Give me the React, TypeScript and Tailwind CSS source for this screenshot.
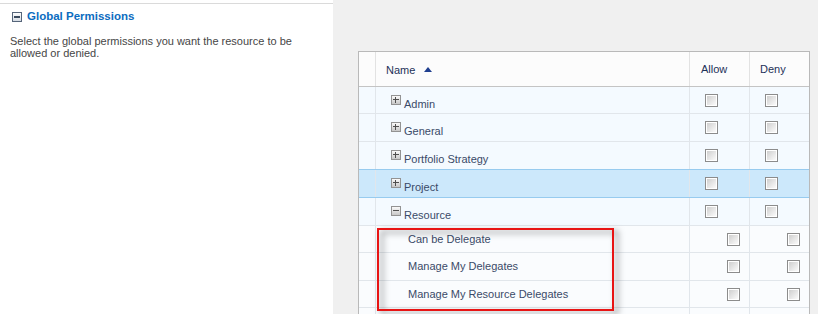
import React from "react";

function Checkbox() {
  return (
    <svg width="13" height="13" viewBox="0 0 13 13" className="block shrink-0">
      <defs>
        <linearGradient id="cbg" x1="0" y1="0" x2="1" y2="1">
          <stop offset="0" stopColor="#cfcfcf" />
          <stop offset="1" stopColor="#fbfbfb" />
        </linearGradient>
      </defs>
      <rect x="0.5" y="0.5" width="12" height="12" fill="#ffffff" stroke="#8c8c8c" />
      <rect x="2" y="2" width="9" height="9" fill="url(#cbg)" />
    </svg>
  );
}

function ExpandIcon({ open }: { open?: boolean }) {
  return (
    <svg width="10" height="10" viewBox="0 0 10 10" className="block shrink-0">
      <defs>
        <linearGradient id="exg" x1="0" y1="0" x2="0" y2="1">
          <stop offset="0" stopColor="#fdfdfd" />
          <stop offset="1" stopColor="#c4c4c4" />
        </linearGradient>
      </defs>
      <rect x="0.5" y="0.5" width="9" height="9" fill="url(#exg)" stroke="#939393" />
      <rect x="2" y="4" width="6" height="1" fill="#4f4f4f" />
      {!open && <rect x="4" y="2" width="1" height="6" fill="#4f4f4f" />}
    </svg>
  );
}

function SectionIcon() {
  return (
    <svg width="10" height="10" viewBox="0 0 10 10" className="block shrink-0">
      <defs>
        <linearGradient id="scg" x1="0" y1="0" x2="0" y2="1">
          <stop offset="0" stopColor="#ffffff" />
          <stop offset="1" stopColor="#d3d9e1" />
        </linearGradient>
      </defs>
      <rect x="0.5" y="0.5" width="9" height="9" fill="url(#scg)" stroke="#56657a" />
      <rect x="2" y="4" width="6" height="2" fill="#3b4a5e" />
    </svg>
  );
}

type Row = {
  name: string;
  kind: "parent" | "child";
  open?: boolean;
  h: string;
  rowClass: string;
};

const rows: Row[] = [
  { name: "Admin", kind: "parent", h: "h-[27px]", rowClass: "bg-[#f4faff] border-[#e1e6eb]" },
  { name: "General", kind: "parent", h: "h-[28px]", rowClass: "bg-[#f4faff] border-[#e1e6eb]" },
  { name: "Portfolio Strategy", kind: "parent", h: "h-[28px]", rowClass: "bg-[#f4faff] border-[#97cbef]" },
  { name: "Project", kind: "parent", h: "h-[28px]", rowClass: "bg-[#cce8fb] border-[#97cbef]" },
  { name: "Resource", kind: "parent", open: true, h: "h-[28px]", rowClass: "bg-[#f4faff] border-[#e1e6eb]" },
  { name: "Can be Delegate", kind: "child", h: "h-[27px]", rowClass: "bg-[#fafcfe] border-[#e1e6eb]" },
  { name: "Manage My Delegates", kind: "child", h: "h-[28px]", rowClass: "bg-[#fafcfe] border-[#e1e6eb]" },
  { name: "Manage My Resource Delegates", kind: "child", h: "h-[27px]", rowClass: "bg-[#fafcfe] border-[#e1e6eb]" },
];

function TableRow({ row }: { row: Row }) {
  const child = row.kind === "child";
  return (
    <div className={`flex border-b ${row.h} ${row.rowClass}`}>
      <div className="w-[17px] border-r border-[#e1e6eb]" />
      {child ? (
        <div className="w-[314px] border-r border-[#e1e6eb] pl-[32px] pt-[7px] leading-[13px] text-[#3a4a68]">
          {row.name}
        </div>
      ) : (
        <div className="w-[314px] border-r border-[#e1e6eb] flex items-start pl-[15px] pt-[8px] text-[#3a4a68]">
          <ExpandIcon open={row.open} />
          <span className="ml-[3px] mt-[3px] leading-[13px]">{row.name}</span>
        </div>
      )}
      <div className={`w-[60px] border-r border-[#e1e6eb] flex items-center ${child ? "pl-[37px]" : "pl-[15px]"}`}>
        <Checkbox />
      </div>
      <div className={`w-[59px] flex items-center ${child ? "pl-[37px]" : "pl-[15px]"}`}>
        <Checkbox />
      </div>
    </div>
  );
}

export default function App() {
  return (
    <div className="flex w-[818px] h-[314px] overflow-hidden font-['Liberation_Sans',Arial,sans-serif] text-[11px]">
      <div className="w-[333px] shrink-0 bg-white pt-[3px]">
        <div className="border-t border-[#dadada] pl-[12px] pt-[6px]">
          <div className="flex items-center">
            <SectionIcon />
            <span className="ml-[5px] font-bold text-[11.5px] leading-[13px] text-[#0b6cbf]">Global Permissions</span>
          </div>
          <p className="ml-[-2px] mt-[12px] w-[300px] leading-[12px] text-[#464646]">
            Select the global permissions you want the resource to be allowed or denied.
          </p>
        </div>
      </div>
      <div className="flex-1 bg-[#f0f0f0] pl-[25px] pt-[51px]">
        <div className="relative w-[452px] border border-[#b9b9b9] border-b-0">
          <div className="flex h-[35px] bg-[#fcfcfc] border-b border-[#c4c4c4] text-[#1c3158]">
            <div className="w-[17px] border-r border-[#e2e2e2]" />
            <div className="w-[314px] border-r border-[#e2e2e2] flex items-center pl-[10px] pt-[2px]">
              <span>Name</span>
              <svg width="8" height="5" viewBox="0 0 8 5" className="ml-[9px] mb-[1px]">
                <path d="M0 5 L4 0 L8 5 Z" fill="#1f3f8f" />
              </svg>
            </div>
            <div className="w-[60px] border-r border-[#e2e2e2] flex items-center pl-[11px] pt-[1px]">Allow</div>
            <div className="w-[59px] flex items-center pl-[10px] pt-[1px]">Deny</div>
          </div>
          {rows.map((r) => (
            <TableRow key={r.name} row={r} />
          ))}
          <div className="flex h-[20px] bg-[#fafcfe]">
            <div className="w-[17px] border-r border-[#e1e6eb]" />
            <div className="w-[314px] border-r border-[#e1e6eb]" />
            <div className="w-[60px] border-r border-[#e1e6eb]" />
            <div className="w-[59px]" />
          </div>
          <div className="absolute left-[18px] top-[176px] w-[237px] h-[83px] border-2 border-[#e81414] [filter:drop-shadow(4px_3px_3px_rgba(0,0,0,0.5))]" />
        </div>
      </div>
    </div>
  );
}
